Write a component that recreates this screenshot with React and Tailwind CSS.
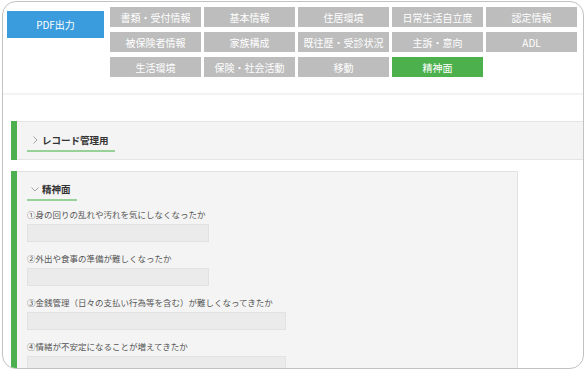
import React from 'react';

const tabs = [
  ['書類・受付情報', '基本情報', '住居環境', '日常生活自立度', '認定情報'],
  ['被保険者情報', '家族構成', '既往歴・受診状況', '主訴・意向', 'ADL'],
  ['生活環境', '保険・社会活動', '移動', '精神面'],
];

const questions = [
  { text: '①身の回りの乱れや汚れを気にしなくなったか', wide: false },
  { text: '②外出や食事の準備が難しくなったか', wide: false },
  { text: '③金銭管理（日々の支払い行為等を含む）が難しくなってきたか', wide: true },
  { text: '④情緒が不安定になることが増えてきたか', wide: true },
];

const font = { fontFamily: '"Noto Sans CJK JP", "Noto Sans", sans-serif' };

const Chevron = ({ down }) => (
  <svg width="8" height="8" viewBox="0 0 8 8" className="mr-[3px] shrink-0">
    {down ? (
      <polyline points="0.5,2.5 4,6 7.5,2.5" fill="none" stroke="#9a9a9a" strokeWidth="0.9" />
    ) : (
      <polyline points="2.5,0.5 6,4 2.5,7.5" fill="none" stroke="#9a9a9a" strokeWidth="0.9" />
    )}
  </svg>
);

const SectionTitle = ({ title, down }) => (
  <div className="flex w-fit items-center h-[14px] pb-[3px] box-content pl-[4px] pr-[6px] border-b-2 border-[#97d197]">
    <Chevron down={down} />
    <span className="text-[9.5px] font-bold text-[#333] leading-[14px]">{title}</span>
  </div>
);

const App = () => {
  return (
    <div className="w-[585px] h-[370px] bg-white pl-[2px] pr-[1px] pt-[1px] pb-[1px]" style={font}>
      <div className="w-full h-full rounded-[14px] border border-[#c2c2c2] overflow-hidden bg-white">
        {/* Header */}
        <div className="flex items-start pt-[5px] pl-[4px]">
          <div className="w-[97px] h-[27px] mt-[4px] bg-[#3a9cdc] text-white text-[10px] flex items-center justify-center">
            PDF出力
          </div>
          <div className="ml-[6px] flex flex-col gap-[5px]">
            {tabs.map((row, i) => (
              <div key={i} className="flex gap-[3px]">
                {row.map((t) => (
                  <div
                    key={t}
                    className={`w-[91px] h-[20px] flex items-center justify-center text-[10px] text-white ${
                      t === '精神面' ? 'bg-[#4cb14c]' : 'bg-[#bdbdbd]'
                    }`}
                  >
                    {t}
                  </div>
                ))}
              </div>
            ))}
          </div>
        </div>

        <div className="mt-[16px] h-[2px] bg-[#f3f3f3]" />

        {/* Record section */}
        <div className="mt-[26px] ml-[8px] h-[39px] flex bg-[#f4f4f4] border-y border-[#e4e4e4]">
          <div className="w-[6px] bg-[#4caf50] -my-px" />
          <div className="pl-[10px] pt-[11px]">
            <SectionTitle title="レコード管理用" />
          </div>
        </div>

        {/* Mental section */}
        <div className="mt-[11px] ml-[8px] w-[507px] h-[220px] flex bg-[#f4f4f4] border border-l-0 border-[#e2e2e2]">
          <div className="w-[6px] bg-[#4caf50] -mt-px" />
          <div className="pl-[10px] pt-[10px] flex flex-col">
            <SectionTitle title="精神面" down />
            <div className="mt-[7px] flex flex-col">
              {questions.map((q) => (
                <div key={q.text} className="flex flex-col mb-[10px]">
                  <div className="text-[8.5px] leading-[12px] text-[#555]">{q.text}</div>
                  <div
                    className={`mt-[4px] h-[18px] bg-[#ebebeb] border border-[#e2e2e2] ${
                      q.wide ? 'w-[259px]' : 'w-[182px]'
                    }`}
                  />
                </div>
              ))}
            </div>
          </div>
        </div>
      </div>
    </div>
  );
};

export default App;
